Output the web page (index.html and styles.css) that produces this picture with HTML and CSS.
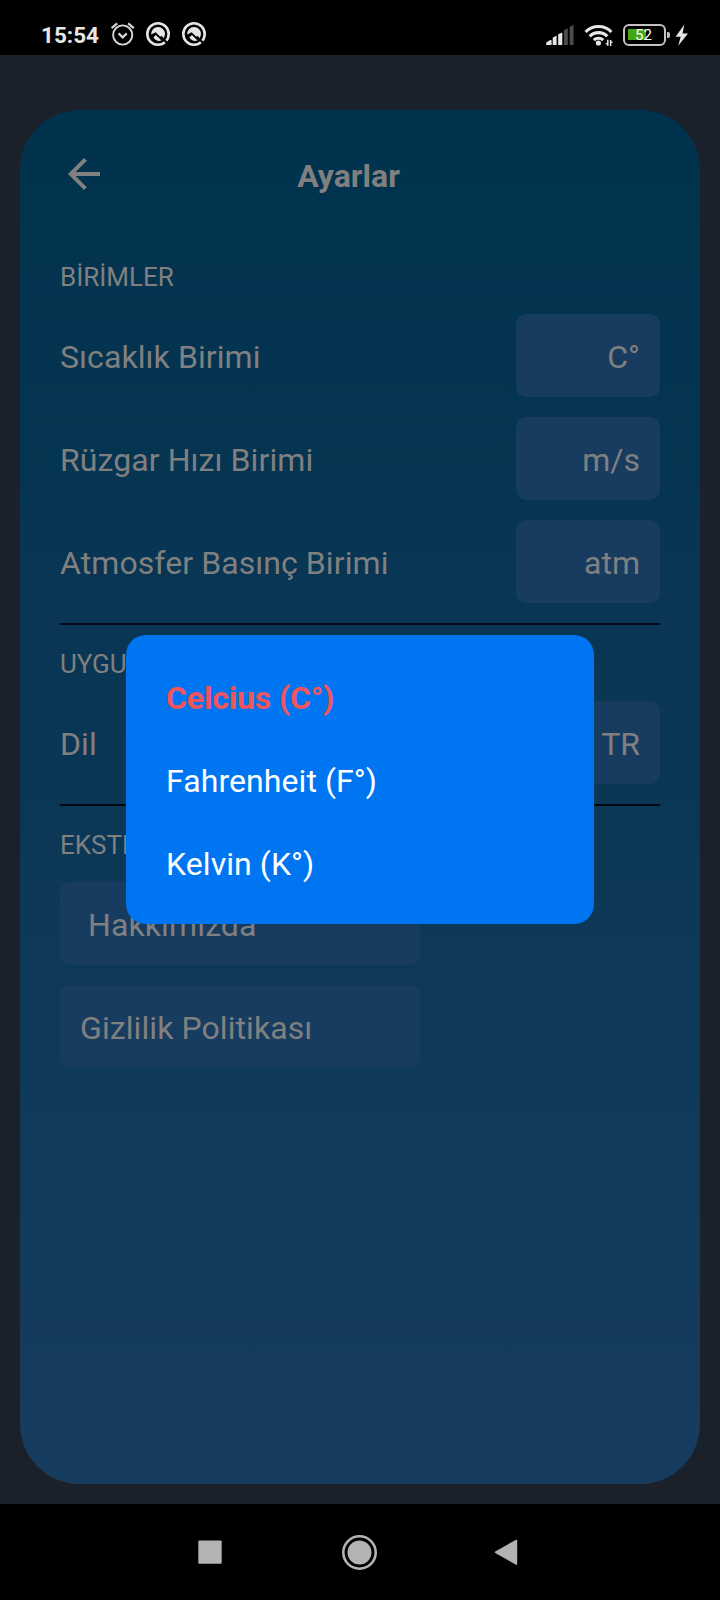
FILE: index.html
```html
<!DOCTYPE html>
<html lang="tr">
<head>
<meta charset="utf-8">
<title>Ayarlar</title>
<link rel="stylesheet" href="styles.css">
</head>
<body>
<div class="screen">
  <div class="status-bar">
    <span class="clock">15:54</span>
    <svg class="alarm" width="26" height="26" viewBox="0 0 26 26" fill="none" stroke="#d6d6d6" stroke-width="1.9">
      <circle cx="12.7" cy="14" r="9.6"/>
      <path d="M1.6 7.2 7.2 2.4M23.8 7.2 18.2 2.4" stroke-width="2.2"/>
      <path d="m8.6 12.4 4.1 4 4.1-4" stroke-width="2.2"/>
    </svg>
    <svg class="quick" width="26" height="26" viewBox="0 0 26 26">
      <circle cx="13" cy="13" r="10.7" fill="none" stroke="#e6e6e6" stroke-width="2.6"/>
      <path d="M6.2 13.6A6.9 6.9 0 1 1 18.9 16.6L18 18.6 10.7 11.2z" fill="#e6e6e6"/>
      <path d="m8.3 16.4 2.6-2.4 5.6 5.4q-4.8 1.8-8.2-3z" fill="#e6e6e6"/>
      <path d="m15.5 15.5 8.5 8.2" stroke="#000" stroke-width="2.2"/>
    </svg>
    <svg class="quick" width="26" height="26" viewBox="0 0 26 26">
      <circle cx="13" cy="13" r="10.7" fill="none" stroke="#e6e6e6" stroke-width="2.6"/>
      <path d="M6.2 13.6A6.9 6.9 0 1 1 18.9 16.6L18 18.6 10.7 11.2z" fill="#e6e6e6"/>
      <path d="m8.3 16.4 2.6-2.4 5.6 5.4q-4.8 1.8-8.2-3z" fill="#e6e6e6"/>
      <path d="m15.5 15.5 8.5 8.2" stroke="#000" stroke-width="2.2"/>
    </svg>
    <svg class="signal" width="28" height="22" viewBox="0 0 28 22" fill="#e6e6e6">
      <path d="M.2 21v-2.4L4.4 16q1.2-.4 1.2.6V21zM6.7 21v-7.2l3.9-2.3V21zM12.2 21V10.2l4.1-1.8V21z"/>
      <path d="M18 21V6.2l3.8-2V21zM23.7 21V3l3.8-2.2V21z" fill="#4c4c4c"/>
    </svg>
    <svg class="wifi" width="30" height="24" viewBox="0 0 30 24" fill="none" stroke="#e6e6e6">
      <path d="M1.6 9a18 18 0 0 1 25.8 0M5.7 13.3a12.4 12.4 0 0 1 17.6 0M9.8 17.2a6.8 6.8 0 0 1 9.4 0" stroke-width="3.1"/>
      <circle cx="14.4" cy="20" r="2.6" fill="#e6e6e6" stroke="none"/>
      <path d="M23.8 16.8v6M26.6 17v6M24 20.8h-2.2M26.5 19.2h2" stroke-width="1.5"/>
    </svg>
    <div class="battery"><span class="battery-level"></span><span class="battery-text">52</span></div>
    <svg class="bolt" width="16" height="24" viewBox="0 0 16 24"><path d="M10.3 1.6 1.6 13.7h5.1L4.2 22.7 14 10.4H8.6z" fill="#e6e6e6"/></svg>
  </div>

  <div class="app">
    <main class="card">
      <header class="header">
        <svg class="back" width="48" height="48" viewBox="0 0 24 24"><path fill="#808080" d="M20 11H7.83l5.59-5.59L12 4l-8 8 8 8 1.41-1.41L7.83 13H20v-2z"/></svg>
        <h1 class="title">Ayarlar</h1>
      </header>

      <section class="section">
        <h2 class="section-title">BİRİMLER</h2>
        <div class="rows">
          <div class="row"><span class="label">Sıcaklık Birimi</span><span class="value">C°</span></div>
          <div class="row"><span class="label">Rüzgar Hızı Birimi</span><span class="value">m/s</span></div>
          <div class="row"><span class="label">Atmosfer Basınç Birimi</span><span class="value">atm</span></div>
        </div>
      </section>

      <section class="section">
        <h2 class="section-title">UYGULAMA</h2>
        <div class="rows">
          <div class="row"><span class="label">Dil</span><span class="value">TR</span></div>
        </div>
      </section>

      <section class="section section-last">
        <h2 class="section-title">EKSTRA</h2>
        <div class="rows">
          <div class="link link-about">Hakkımızda</div>
          <div class="link">Gizlilik Politikası</div>
        </div>
      </section>
    </main>

    <div class="modal">
      <div class="option option-selected">Celcius (C°)</div>
      <div class="option">Fahrenheit (F°)</div>
      <div class="option">Kelvin (K°)</div>
    </div>
  </div>

  <nav class="nav-bar">
    <svg width="40" height="40" viewBox="0 0 40 40"><rect x="8.3" y="8.5" width="23.4" height="23.2" rx="1" fill="#b3b3b3"/></svg>
    <svg width="40" height="40" viewBox="0 0 40 40"><circle cx="21.5" cy="20.5" r="16.2" fill="none" stroke="#b3b3b3" stroke-width="2.6"/><circle cx="21.5" cy="20.5" r="12" fill="#b3b3b3"/></svg>
    <svg width="40" height="40" viewBox="0 0 40 40"><path d="M9.6 20.2 30.4 8.5v23.6z" fill="#b3b3b3" stroke="#b3b3b3" stroke-width="1.6" stroke-linejoin="round"/></svg>
  </nav>
</div>
</body>
</html>
```

FILE: styles.css
```css
* { box-sizing: border-box; }

body {
  margin: 0;
  background: #000;
  font-family: Roboto, "Noto Sans", sans-serif;
}

svg { display: block; flex: none; }

.screen {
  width: 720px;
  height: 1600px;
  display: flex;
  flex-direction: column;
}

.status-bar {
  height: 55px;
  display: flex;
  align-items: flex-start;
  padding: 21px 30px 0 41px;
}

.clock {
  width: 58px;
  color: #e6e6e6;
  font-size: 22.5px;
  font-weight: 700;
  line-height: 28px;
  white-space: nowrap;
}

.alarm { margin-left: 11px; }
.quick { margin-left: 9px; }
.quick + .quick { margin-left: 10px; }
.signal { margin: 3px 0 0 auto; }
.wifi { margin: 2px 0 0 10px; }

.battery {
  position: relative;
  width: 43px;
  height: 22px;
  margin: 3px 0 0 9px;
  padding: 3px;
  border: 2px solid #c4c0c4;
  border-radius: 6px;
}

.battery::after {
  content: "";
  position: absolute;
  right: -6px;
  top: 6px;
  width: 3px;
  height: 6px;
  background: #c4c0c4;
  border-radius: 0 2px 2px 0;
}

.battery-level {
  display: block;
  width: 18px;
  height: 11px;
  background: #44a813;
}

.battery-text {
  position: absolute;
  inset: 0 2px 0 0;
  color: #fff;
  font-size: 15px;
  font-weight: 400;
  line-height: 18px;
  text-align: center;
}

.bolt { margin: 2px 0 0 8px; }

.app {
  position: relative;
  height: 1449px;
  padding: 55px 20px 20px;
  background: #1a212a;
}

.card {
  height: 1374px;
  padding: 0 40px;
  border-radius: 60px;
  background: linear-gradient(#00324d, #163c60);
  color: #808080;
}

.header {
  height: 128px;
  display: flex;
  align-items: center;
}

.title {
  flex: 1;
  margin: 0 71px 0 0;
  padding-top: 4px;
  font-size: 32px;
  font-weight: 700;
  line-height: 38px;
  text-align: center;
}

.section {
  padding-bottom: 20px;
  border-bottom: 2px solid #02080e;
}

.section-last { border-bottom: 0; }

.section-title {
  margin: 0;
  padding: 21px 0 19px;
  font-size: 26px;
  font-weight: 400;
  line-height: 36px;
}

.rows {
  display: flex;
  flex-direction: column;
  gap: 20px;
}

.row {
  display: flex;
  justify-content: space-between;
}

.label, .value, .link, .option {
  font-size: 32px;
  line-height: 43px;
  padding-top: 22px;
  padding-bottom: 18px;
  white-space: nowrap;
}

.label, .link, .option { letter-spacing: 0.08px; }

.value, .link {
  padding-left: 20px;
  padding-right: 20px;
  border-radius: 10px;
  background: #173c5f;
}

.value {
  width: 144px;
  text-align: right;
}

.link { width: 360px; }
.link-about { padding-left: 28px; }

.modal {
  position: absolute;
  left: 126px;
  top: 580px;
  width: 468px;
  padding: 20px 40px;
  border-radius: 20px;
  background: #0075f2;
  color: #fff;
}

.option-selected {
  color: #f2545b;
  font-weight: 700;
  letter-spacing: -0.15px;
}

.nav-bar {
  height: 96px;
  display: flex;
  align-items: center;
  justify-content: space-between;
  padding: 0 194px 0 190px;
}
```
